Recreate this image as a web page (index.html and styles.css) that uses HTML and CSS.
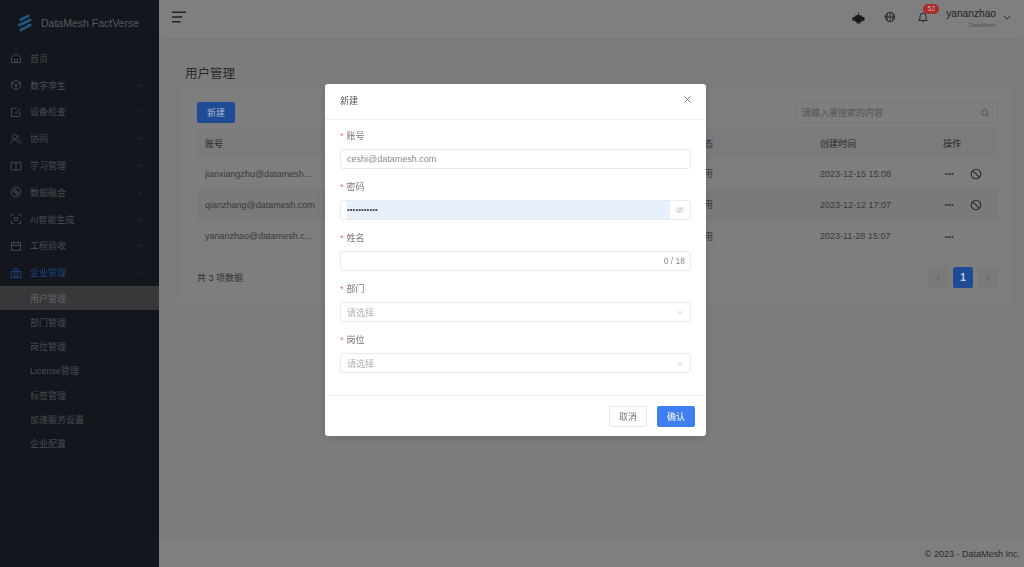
FILE: index.html
```html
<!DOCTYPE html>
<html lang="zh">
<head>
<meta charset="utf-8">
<title>用户管理</title>
<link rel="stylesheet" href="styles.css">
</head>
<body>
<div class="app">
  <aside class="sidebar">
    <div class="brand">
      <svg class="logo" viewBox="0 0 16 18"><path d="M4 5.500 11 2M2.500 11 13 6M4 16l9-5"/></svg>
      <span>DataMesh FactVerse</span>
    </div>
    <nav class="menu">
      <div class="item"><svg class="ico" viewBox="0 0 16 16"><path d="M2 7l6-5 6 5v7H2zM6 14v-4h4v4"/></svg><span class="lab">首页</span></div>
      <div class="item"><svg class="ico" viewBox="0 0 16 16"><path d="M8 1.500 14 5v6l-6 3.500L2 11V5zM2 5l6 3.500 6-3.500M8 8v6.500"/></svg><span class="lab">数字孪生</span><svg class="chev" viewBox="0 0 10 6"><path d="M1 1l4 4 4-4"/></svg></div>
      <div class="item"><svg class="ico" viewBox="0 0 16 16"><path d="M13 8v6H2V3h7M6 8l2 2 6-7"/></svg><span class="lab">设备检查</span><svg class="chev" viewBox="0 0 10 6"><path d="M1 1l4 4 4-4"/></svg></div>
      <div class="item"><svg class="ico" viewBox="0 0 16 16"><circle cx="6" cy="5" r="3"/><path d="M1 14c0-3 2-5 5-5s5 2 5 5M10 2.500a3 3 0 0 1 0 5M12 9.500c2 .5 3 2.500 3 4.500"/></svg><span class="lab">协同</span><svg class="chev" viewBox="0 0 10 6"><path d="M1 1l4 4 4-4"/></svg></div>
      <div class="item"><svg class="ico" viewBox="0 0 16 16"><path d="M8 4C6.500 3 4 3 1.500 3v10C4 13 6.500 13 8 14c1.500-1 4-1 6.500-1V3C12 3 9.500 3 8 4zM8 4v10"/></svg><span class="lab">学习管理</span><svg class="chev" viewBox="0 0 10 6"><path d="M1 1l4 4 4-4"/></svg></div>
      <div class="item"><svg class="ico" viewBox="0 0 16 16"><circle cx="8" cy="8" r="6.500"/><path d="M5 5h3v3H5zM8 8h3v3H8z"/></svg><span class="lab">数据融合</span><svg class="chev" viewBox="0 0 10 6"><path d="M1 1l4 4 4-4"/></svg></div>
      <div class="item"><svg class="ico" viewBox="0 0 16 16"><path d="M2 5V2h3M11 2h3v3M14 11v3h-3M5 14H2v-3M6 6h4v4H6z"/></svg><span class="lab">AI智能生成</span><svg class="chev" viewBox="0 0 10 6"><path d="M1 1l4 4 4-4"/></svg></div>
      <div class="item"><svg class="ico" viewBox="0 0 16 16"><path d="M2 3.500h12V14H2zM2 7h12M5 1.500v3M11 1.500v3"/></svg><span class="lab">工程验收</span><svg class="chev" viewBox="0 0 10 6"><path d="M1 1l4 4 4-4"/></svg></div>
      <div class="item active"><svg class="ico" viewBox="0 0 16 16"><path d="M1.500 6h13v8h-13zM5 6V2.500h6V6M6 6v8M10 6v8"/></svg><span class="lab">企业管理</span><svg class="chev" viewBox="0 0 10 6"><path d="M1 5l4-4 4 4"/></svg></div>
      <div class="sub current">用户管理</div>
      <div class="sub">部门管理</div>
      <div class="sub">岗位管理</div>
      <div class="sub">License管理</div>
      <div class="sub">标签管理</div>
      <div class="sub">加速服务设置</div>
      <div class="sub">企业配置</div>
    </nav>
  </aside>
  <div class="main">
    <header class="topbar">
      <svg class="burger" viewBox="0 0 16 12"><path d="M0 1h15M0 6h11M0 11h9"/></svg>
      <div class="tools">
        <svg class="tool robot" viewBox="0 0 14 14"><path class="solid" d="M4 5h6l1 2v3l-2 2H5l-2-2V7zM1 7h1.500v3H1zM11.500 7H13v3h-1.500z"/><path d="M7 1.500V5M5 13h4"/></svg>
        <svg class="tool" viewBox="0 0 14 14"><circle cx="7" cy="7" r="5.500"/><path d="M1.500 7h11M7 1.500v11M4.500 2.500c-1.500 3-1.500 6 0 9M9.500 2.500c1.500 3 1.500 6 0 9"/></svg>
        <div class="bell">
          <svg class="tool" viewBox="0 0 14 14"><path d="M2 11h10l-1.500-2V6a3.500 3.500 0 0 0-7 0v3zM6 12.500h2"/></svg>
          <span class="badge">52</span>
        </div>
        <div class="user"><span class="uname">yananzhao</span><span class="org">DataMesh</span></div>
        <svg class="uchev" viewBox="0 0 10 6"><path d="M1 1l4 4 4-4"/></svg>
      </div>
    </header>
    <main class="content">
      <h1 class="title">用户管理</h1>
      <section class="card">
        <div class="toolbar">
          <button class="btn-new">新建</button>
          <div class="search"><span>请输入要搜索的内容</span><svg class="mag" viewBox="0 0 12 12"><circle cx="5.500" cy="5.500" r="3.500"/><path d="M8 8l2.500 2.500"/></svg></div>
        </div>
        <div class="table">
          <div class="row head"><span class="c1">账号</span><span class="c2"></span><span class="c3">状态</span><span class="c4">创建时间</span><span class="c5">操作</span></div>
          <div class="row"><span class="c1">jianxiangzhu@datamesh...</span><span class="c2"></span><span class="c3">启用</span><span class="c4">2023-12-15 15:08</span><span class="c5"><i class="dots">•••</i><svg class="ban" viewBox="0 0 12 12"><circle cx="6" cy="6" r="4.800"/><path d="M2.800 2.800l6.400 6.400"/></svg></span></div>
          <div class="row zebra"><span class="c1">qianzhang@datamesh.com</span><span class="c2"></span><span class="c3">启用</span><span class="c4">2023-12-12 17:07</span><span class="c5"><i class="dots">•••</i><svg class="ban" viewBox="0 0 12 12"><circle cx="6" cy="6" r="4.800"/><path d="M2.800 2.800l6.400 6.400"/></svg></span></div>
          <div class="row"><span class="c1">yananzhao@datamesh.c...</span><span class="c2"></span><span class="c3">启用</span><span class="c4">2023-11-28 15:07</span><span class="c5"><i class="dots">•••</i></span></div>
        </div>
        <div class="pager-row">
          <span class="total">共 3 项数据</span>
          <div class="pager"><span class="pg">‹</span><span class="pg on">1</span><span class="pg">›</span></div>
        </div>
      </section>
    </main>
    <footer class="foot">© 2023 - DataMesh Inc.</footer>
  </div>
</div>
<div class="overlay"></div>
<div class="modal">
  <div class="m-head"><span>新建</span><svg class="close" viewBox="0 0 10 10"><path d="M1.500 1.500l7 7M8.500 1.500l-7 7"/></svg></div>
  <div class="m-body">
    <div class="field"><label class="req">账号</label><div class="input value">ceshi@datamesh.com</div></div>
    <div class="field"><label class="req">密码</label><div class="input pw"><span class="fill">•••••••••••</span><svg class="eye" viewBox="0 0 14 10"><path d="M1 5c2-4 10-4 12 0-2 4-10 4-12 0z"/><circle cx="7" cy="5" r="2"/><path d="M3 9l8-8"/></svg></div></div>
    <div class="field"><label class="req">姓名</label><div class="input count"><span>0 / 18</span></div></div>
    <div class="field"><label class="req">部门</label><div class="input select"><span>请选择</span><svg class="sel" viewBox="0 0 10 6"><path d="M1 1l4 4 4-4"/></svg></div></div>
    <div class="field"><label class="req">岗位</label><div class="input select"><span>请选择</span><svg class="sel" viewBox="0 0 10 6"><path d="M1 1l4 4 4-4"/></svg></div></div>
  </div>
  <div class="m-foot"><button class="btn-cancel">取消</button><button class="btn-ok">确认</button></div>
</div>
</body>
</html>
```
FILE: styles.css
```css
* { box-sizing: border-box; }
html, body { margin: 0; height: 100%; }
body { font-family: "Liberation Sans", "Noto Sans CJK SC", sans-serif; font-size: 9px; color: #333; overflow: hidden; }
svg { fill: none; stroke: currentColor; }
.app { display: flex; height: 567px; }

.sidebar { width: 159px; flex: none; background: #262c3a; color: #8f959d; }
.brand { height: 45px; display: flex; align-items: center; gap: 8px; padding-left: 17px; font-size: 10.500px; color: #a8acb2; }
.logo { width: 16px; height: 18px; stroke: #3ab0f8; stroke-width: 3; stroke-linecap: round; }
.menu { display: flex; flex-direction: column; }
.item { height: 26.800px; flex: none; display: flex; align-items: center; padding: 0 16px 0 10px; }
.ico { width: 12px; height: 12px; flex: none; stroke-width: 1.200; margin-right: 8px; }
.lab { flex: 1; }
.chev { width: 7px; height: 5px; stroke-width: 1; opacity: .6; }
.item.active { color: #1c4488; position: relative; z-index: 2; }
.sub { height: 24.200px; flex: none; display: flex; align-items: center; padding-left: 30px; }
.sub.current { background: #6c7075; color: #c4c6c9; }

.main { flex: 1; display: flex; flex-direction: column; background: #f8f9fb; min-width: 0; }
.topbar { height: 39px; flex: none; background: #fff; display: flex; align-items: flex-start; justify-content: space-between; padding: 11px 13px 0 13px; box-shadow: 0 1px 3px rgba(0,0,0,.05); }
.burger { width: 15px; height: 12px; stroke-width: 1.500; color: #444; }
.tools { display: flex; align-items: center; margin-top: -5.500px; }
.tool { width: 12px; height: 12px; color: #333; stroke-width: 1; }
.robot { width: 13px; height: 13px; margin-right: 19px; }
.solid { fill: currentColor; }
.bell { position: relative; margin-left: 21px; display: flex; }
.badge { position: absolute; z-index: 2; left: 6px; top: -7px; height: 10px; padding: 0 4px; border-radius: 5px; background: #a82a2a; color: #d8b0b0; font-size: 7.500px; line-height: 10px; }
.user { display: flex; flex-direction: column; align-items: flex-end; margin-left: 17px; padding-top: 2px; }
.uname { font-size: 10.200px; line-height: 12px; color: #444; }
.org { font-size: 6px; line-height: 8px; color: #aaa; margin-top: 1px; }
.uchev { width: 8px; height: 5px; margin-left: 7px; color: #444; stroke-width: 1.200; }

.content { flex: 1; padding: 27px 14px 0 24px; min-height: 0; }
.title { margin: 0 0 6px; padding-left: 2px; font-size: 12.500px; line-height: 16px; font-weight: 400; color: #555; }
.card { background: #fcfcfd; height: 214px; padding: 14px 12px 0 14px; }
.toolbar { display: flex; justify-content: space-between; align-items: center; height: 21px; margin-bottom: 5px; }
.btn-new { position: relative; z-index: 2; width: 38px; height: 21px; border: 0; border-radius: 2px; background: #1f4a94; color: #a9b8d4; font: inherit; padding: 0; }
.search { width: 202px; height: 21px; border: 1px solid #ebedf0; border-radius: 2px; background: #fdfdfd; display: flex; align-items: center; justify-content: space-between; padding: 0 7px 0 5px; color: #aaa; }
.mag { width: 10px; height: 10px; color: #aaa; stroke-width: 1.200; }

.table { display: flex; flex-direction: column; }
.row { height: 31.300px; display: flex; align-items: center; color: #777; }
.row.head { height: 30px; background: #f5f6f9; color: #555; }
.row.zebra { background: #f3f4f6; }
.c1 { width: 165px; padding-left: 8px; }
.c2 { flex: 1; }
.c3 { width: 125px; }
.c4 { width: 123px; }
.c5 { width: 55px; display: flex; align-items: center; }
.dots { font-style: normal; font-size: 7px; letter-spacing: .6px; width: 27px; padding-left: 2px; color: #555; }
.ban { width: 12px; height: 12px; color: #555; stroke-width: 1.100; }
.pager-row { display: flex; justify-content: space-between; align-items: center; margin-top: 15px; }
.total { color: #666; }
.pager { display: flex; gap: 5px; }
.pg { width: 20px; height: 21px; display: flex; align-items: center; justify-content: center; background: #f3f4f6; color: #bbb; font-size: 10px; border-radius: 2px; }
.pg.on { position: relative; z-index: 2; background: #1f4a94; color: #c4d0e6; font-weight: 700; }

.foot { height: 27px; flex: none; background: #fff; display: flex; align-items: center; justify-content: flex-end; padding-right: 4px; color: #555; }

.overlay { position: fixed; inset: 0; background: rgba(0,0,0,.5); }
.modal { position: fixed; left: 325px; top: 84px; width: 381px; height: 352px; background: #fff; border-radius: 3px; display: flex; flex-direction: column; box-shadow: 0 2px 8px rgba(0,0,0,.15); }
.m-head { height: 36px; flex: none; display: flex; align-items: center; justify-content: space-between; padding: 0 14px 2px 15px; border-bottom: 1px solid #eef0f2; color: #555; }
.close { width: 9px; height: 9px; color: #777; stroke-width: 1; margin-top: -3px; }
.m-body { flex: 1; padding: 9px 15px 0; display: flex; flex-direction: column; gap: 11px; }
.field { display: flex; flex-direction: column; gap: 5px; }
.req { line-height: 15px; color: #777; }
.req::before { content: "*"; color: #f56c6c; margin-right: 3px; }
.input { height: 20px; border: 1px solid #e8eaee; border-radius: 3px; display: flex; align-items: center; padding: 0 6px; color: #999; }
.input.value { color: #888; }
.input.pw { padding: 0 5px 0 6px; justify-content: space-between; }
.fill { background: #e8f0fe; color: #444; flex: 1; height: 18px; line-height: 18px; margin-right: 5px; font-size: 8px; }
.eye { width: 10px; height: 8px; color: #c4c4c4; stroke-width: 1; flex: none; }
.input.count { justify-content: flex-end; font-size: 8.500px; color: #888; padding-right: 5px; }
.input.select { justify-content: space-between; color: #b0b0b0; }
.sel { width: 8px; height: 5px; color: #c0c4cc; stroke-width: 1; }
.m-foot { height: 41px; flex: none; border-top: 1px solid #eef0f2; display: flex; justify-content: flex-end; align-items: flex-start; gap: 10px; padding: 10px 11px 0 0; }
.btn-cancel, .btn-ok { width: 38px; height: 21px; border-radius: 2px; font: inherit; padding: 0; }
.btn-cancel { background: #fff; border: 1px solid #e8eaee; color: #777; }
.btn-ok { background: #3f7fef; border: 0; color: #fff; }
```
